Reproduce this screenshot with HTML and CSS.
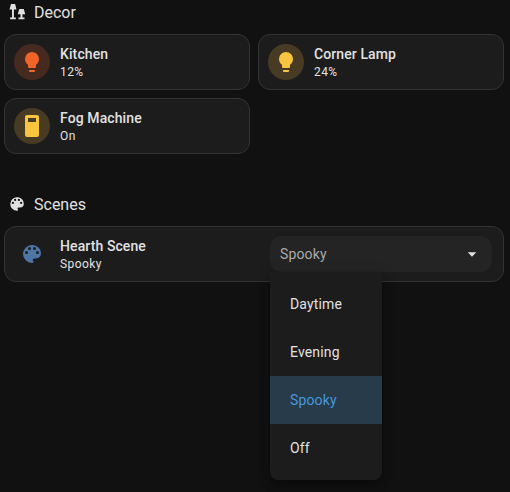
FILE: index.html
```html
<!DOCTYPE html>
<html lang="en">
<head>
<meta charset="utf-8">
<title>Home</title>
<link rel="stylesheet" href="styles.css">
</head>
<body>
<svg class="defs" aria-hidden="true">
  <symbol id="bulb" viewBox="0 0 24 24"><path d="M12,2A7,7 0 0,0 5,9C5,11.38 6.19,13.47 8,14.74V17A1,1 0 0,0 9,18H15A1,1 0 0,0 16,17V14.74C17.81,13.47 19,11.38 19,9A7,7 0 0,0 12,2M9,21A1,1 0 0,0 10,22H14A1,1 0 0,0 15,21V20H9V21Z"/></symbol>
  <symbol id="palette" viewBox="0 0 24 24"><path d="M17.5,12A1.5,1.5 0 0,1 16,10.5A1.5,1.5 0 0,1 17.5,9A1.5,1.5 0 0,1 19,10.5A1.5,1.5 0 0,1 17.5,12M14.5,8A1.5,1.5 0 0,1 13,6.5A1.5,1.5 0 0,1 14.5,5A1.5,1.5 0 0,1 16,6.5A1.5,1.5 0 0,1 14.5,8M9.5,8A1.5,1.5 0 0,1 8,6.5A1.5,1.5 0 0,1 9.5,5A1.5,1.5 0 0,1 11,6.5A1.5,1.5 0 0,1 9.5,8M6.5,12A1.5,1.5 0 0,1 5,10.5A1.5,1.5 0 0,1 6.5,9A1.5,1.5 0 0,1 8,10.5A1.5,1.5 0 0,1 6.5,12M12,3A9,9 0 0,0 3,12A9,9 0 0,0 12,21A1.5,1.5 0 0,0 13.5,20C13.5,19.61 13.35,19.26 13.11,19C12.88,18.73 12.73,18.38 12.73,18A1.5,1.5 0 0,1 14.23,16.5H16A5,5 0 0,0 21,11.5C21,6.58 16.97,3 12,3Z"/></symbol>
</svg>
<main class="view">
  <h2 class="heading">
    <svg class="heading-icon" viewBox="0 0 24 24"><path d="M4 1.3H9.5L11.3 8.5H7.9V19.3H10.5V21.5H2.7V19.3H5.3V8.5H2ZM15 8H21L23 15H19.3V19.3H22V21.5H14V19.3H16.7V15H13Z"/></svg>
    <span>Decor</span>
  </h2>
  <section class="grid">
    <article class="card">
      <div class="badge orange"><svg class="icon"><use href="#bulb"/></svg></div>
      <div class="info"><div class="name">Kitchen</div><div class="state">12%</div></div>
    </article>
    <article class="card">
      <div class="badge amber"><svg class="icon"><use href="#bulb"/></svg></div>
      <div class="info"><div class="name">Corner Lamp</div><div class="state">24%</div></div>
    </article>
    <article class="card">
      <div class="badge amber"><svg class="icon" viewBox="0 0 24 24"><path fill-rule="evenodd" d="M7 1H17A2 2 0 0 1 19 3V21A2 2 0 0 1 17 23H7A2 2 0 0 1 5 21V3A2 2 0 0 1 7 1ZM8 4V8H16V4Z"/></svg></div>
      <div class="info"><div class="name">Fog Machine</div><div class="state">On</div></div>
    </article>
  </section>
  <h2 class="heading scenes">
    <svg class="heading-icon"><use href="#palette"/></svg>
    <span>Scenes</span>
  </h2>
  <article class="card">
    <div class="badge blue"><svg class="icon"><use href="#palette"/></svg></div>
    <div class="info"><div class="name">Hearth Scene</div><div class="state">Spooky</div></div>
    <div class="select">
      <span>Spooky</span>
      <svg class="arrow" viewBox="0 0 10 5"><path d="M.7 .3H9.3L5 4.7Z"/></svg>
      <ul class="menu">
        <li>Daytime</li>
        <li>Evening</li>
        <li class="selected">Spooky</li>
        <li>Off</li>
      </ul>
    </div>
  </article>
</main>
</body>
</html>
```

FILE: styles.css
```css
* { box-sizing: border-box; }

body {
  margin: 0;
  height: 492px;
  overflow: hidden;
  background: #111;
  color: #e1e1e1;
  font-family: Roboto, sans-serif;
}

.defs { position: absolute; width: 0; height: 0; }

svg { display: block; fill: currentColor; }

.view { padding: 1px 6px 0 4px; }

.heading {
  display: flex;
  align-items: center;
  gap: 8px;
  height: 24px;
  margin: 0 0 9px;
  padding-left: 4px;
  font-size: 16px;
  font-weight: 400;
  line-height: 24px;
}

.heading.scenes { margin-top: 39px; }

.heading-icon { width: 18px; height: 18px; margin-bottom: 2px; }

.grid {
  display: grid;
  grid-template-columns: 1fr 1fr;
  gap: 8px;
}

.card {
  display: flex;
  align-items: center;
  height: 56px;
  padding: 0 11px 0 9px;
  background: #1c1c1c;
  border: 1px solid #333;
  border-radius: 12px;
}

.badge {
  display: grid;
  place-items: center;
  width: 36px;
  height: 36px;
  margin-right: 10px;
  border-radius: 50%;
}

.icon { width: 24px; height: 24px; }

.orange { color: #f0642a; background: #472a1f; }
.amber { color: #f9c440; background: #483b23; }
.blue { color: #4d76a5; }

.info { flex: 1; }

.name {
  font-size: 14px;
  font-weight: 500;
  line-height: 20px;
  letter-spacing: 0.1px;
}

.state {
  font-size: 12px;
  line-height: 16px;
  letter-spacing: 0.4px;
}

.select {
  position: relative;
  display: flex;
  align-items: center;
  justify-content: space-between;
  width: 222px;
  height: 36px;
  padding: 0 15px 0 10px;
  border-radius: 12px;
  background: #242424;
  color: #aaa;
  font-size: 14px;
  letter-spacing: 0.15px;
}

.arrow { width: 10px; height: 5px; color: #e1e1e1; }

.menu {
  position: absolute;
  top: 36px;
  left: 0;
  width: 112px;
  margin: 0;
  padding: 8px 0;
  list-style: none;
  background: #1c1c1c;
  color: #e1e1e1;
  border-radius: 0 0 8px 8px;
  box-shadow: 0 5px 5px -3px rgba(0, 0, 0, 0.2), 0 8px 10px 1px rgba(0, 0, 0, 0.14), 0 3px 14px 2px rgba(0, 0, 0, 0.12);
}

.menu li {
  height: 48px;
  padding-left: 20px;
  line-height: 48px;
}

.menu .selected { background: #283b4a; color: #4698dd; }
```
